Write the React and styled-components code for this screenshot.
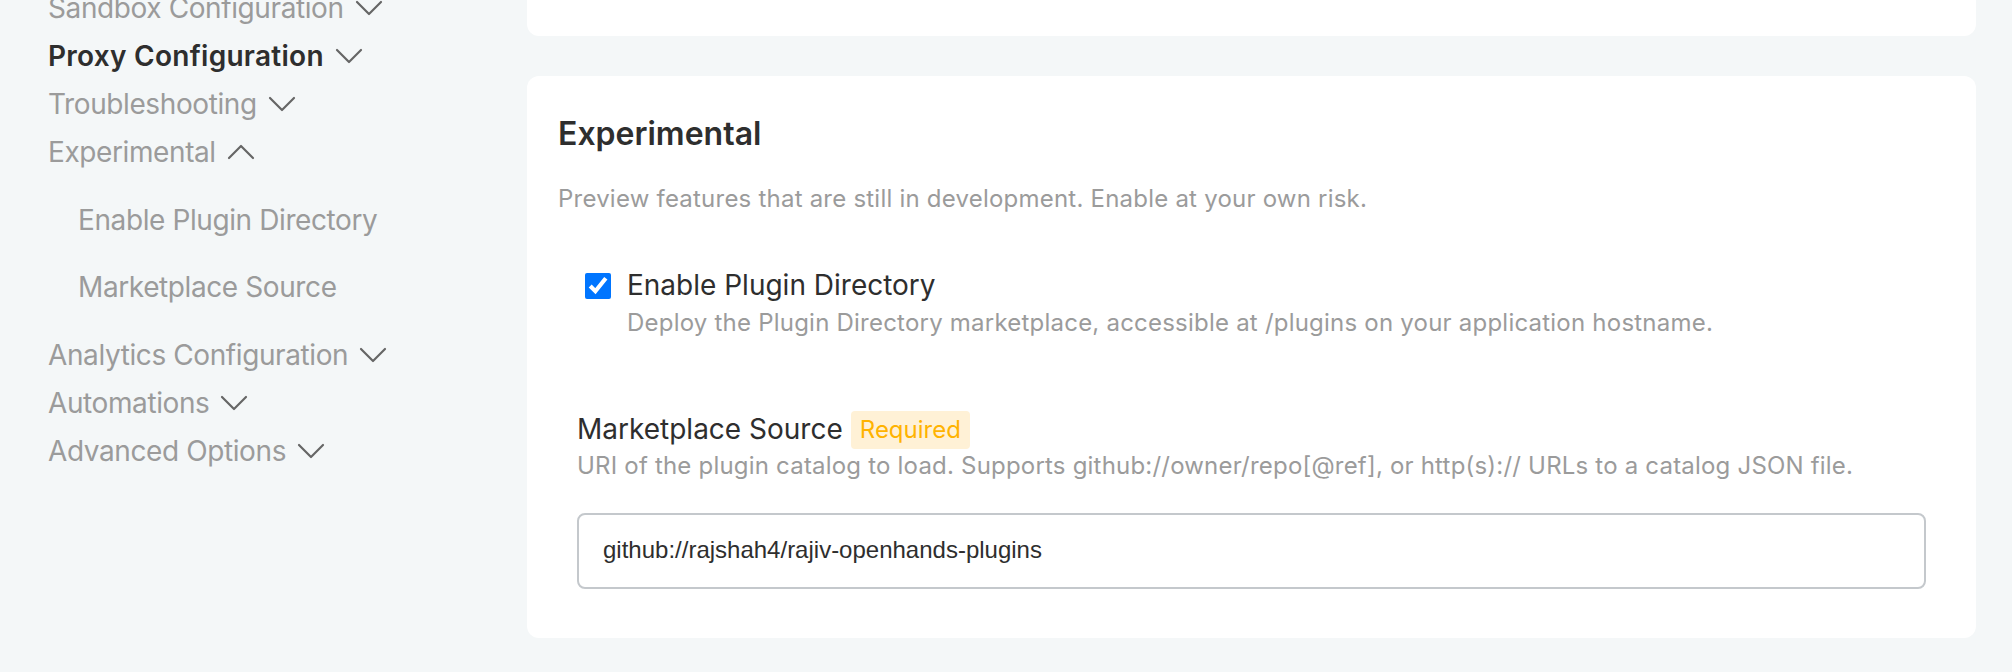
import React from "react";
import styled, { createGlobalStyle } from "styled-components";
import { ChevronDown, ChevronUp } from "lucide-react";

const GlobalStyle = createGlobalStyle`
  html, body {
    margin: 0;
    padding: 0;
    height: 100%;
    background: #f4f7f8;
    overflow: hidden;
  }
  * {
    box-sizing: border-box;
  }
`;

const navItems = [
  { label: "Sandbox Configuration" },
  { label: "Proxy Configuration", active: true },
  { label: "Troubleshooting" },
  {
    label: "Experimental",
    open: true,
    children: ["Enable Plugin Directory", "Marketplace Source"],
  },
  { label: "Analytics Configuration" },
  { label: "Automations" },
  { label: "Advanced Options" },
];

const App = () => {
  return (
    <React.Fragment>
      <GlobalStyle />
      <Page>
        <Sidebar>
          {navItems.map((item) => (
            <React.Fragment key={item.label}>
              <NavItem $active={item.active}>
                {item.label}
                {item.open ? (
                  <ChevronUp size={48} strokeWidth={1.1} color="#666666" />
                ) : (
                  <ChevronDown size={48} strokeWidth={1.1} color="#666666" />
                )}
              </NavItem>
              {item.children && (
                <SubList>
                  {item.children.map((child) => (
                    <SubItem key={child}>{child}</SubItem>
                  ))}
                </SubList>
              )}
            </React.Fragment>
          ))}
        </Sidebar>
        <Content>
          <TopCard />
          <Card>
            <CardTitle>Experimental</CardTitle>
            <CardText>
              Preview features that are still in development. Enable at your own
              risk.
            </CardText>
            <CheckRow>
              <CheckBox readOnly type="checkbox" checked />
              <div>
                <FieldLabel>Enable Plugin Directory</FieldLabel>
                <CheckHelp>
                  Deploy the Plugin Directory marketplace, accessible at
                  /plugins on your application hostname.
                </CheckHelp>
              </div>
            </CheckRow>
            <Field>
              <LabelRow>
                <FieldLabel>Marketplace Source</FieldLabel>
                <Badge>Required</Badge>
              </LabelRow>
              <FieldHelp>
                URI of the plugin catalog to load. Supports
                github://owner/repo[@ref], or http(s):// URLs to a catalog JSON
                file.
              </FieldHelp>
              <TextInput
                readOnly
                value="github://rajshah4/rajiv-openhands-plugins"
              />
            </Field>
          </Card>
        </Content>
      </Page>
    </React.Fragment>
  );
};

export default App;

const Page = styled.div`
  display: flex;
  width: 2012px;
  height: 672px;
  overflow: hidden;
  font-family: Inter, "Liberation Sans", sans-serif;
`;

const Sidebar = styled.nav`
  width: 527px;
  flex-shrink: 0;
  margin-top: -16px;
  padding-left: 48px;
`;

const NavItem = styled.div`
  display: flex;
  align-items: center;
  gap: 1px;
  height: 48px;
  font-size: 28px;
  letter-spacing: ${(props) => (props.$active ? "0.27px" : "-0.4px")};
  font-weight: ${(props) => (props.$active ? 600 : 400)};
  color: ${(props) => (props.$active ? "#2e2e2e" : "#9b9b9b")};
`;

const SubList = styled.div`
  display: flex;
  flex-direction: column;
  gap: 19px;
  padding: 20px 0 20px 30px;
`;

const SubItem = styled.div`
  display: flex;
  align-items: center;
  height: 48px;
  font-size: 28px;
  letter-spacing: -0.4px;
  color: #9b9b9b;
`;

const Content = styled.main`
  flex: 1;
  display: flex;
  flex-direction: column;
  gap: 40px;
  padding-right: 36px;
`;

const TopCard = styled.div`
  height: 36px;
  background: #ffffff;
  border-radius: 0 0 12px 12px;
`;

const Card = styled.section`
  height: 562px;
  padding: 38px 50px 0 31px;
  background: #ffffff;
  border-radius: 12px;
`;

const CardTitle = styled.h2`
  margin: 0;
  font-size: 32px;
  line-height: 40px;
  font-weight: 600;
  color: #2e2e2e;
`;

const CardText = styled.p`
  margin: 29px 0 0;
  font-size: 24px;
  line-height: 32px;
  letter-spacing: 0.22px;
  color: #9b9b9b;
`;

const CheckRow = styled.div`
  display: flex;
  align-items: flex-start;
  gap: 16px;
  margin-top: 50px;
  padding-left: 27px;
`;

const CheckBox = styled.input`
  width: 26px;
  height: 26px;
  margin: 8px 0 0;
  accent-color: #0075ff;
`;

const FieldLabel = styled.div`
  font-size: 28px;
  line-height: 40px;
  color: #2e2e2e;
`;

const CheckHelp = styled.div`
  margin-top: 2px;
  font-size: 24px;
  line-height: 32px;
  letter-spacing: 0.22px;
  color: #9b9b9b;
`;

const Field = styled.div`
  margin-top: 70px;
  padding-left: 19px;
`;

const LabelRow = styled.div`
  display: flex;
  align-items: flex-end;
  gap: 8px;
`;

const Badge = styled.span`
  padding: 0 9px;
  font-size: 24px;
  line-height: 38px;
  color: #ffb300;
  background: #fff1d6;
  border-radius: 4px;
`;

const FieldHelp = styled.div`
  margin-top: 1px;
  font-size: 24px;
  line-height: 32px;
  letter-spacing: 0.2px;
  color: #9b9b9b;
`;

const TextInput = styled.input`
  display: block;
  width: 100%;
  height: 76px;
  margin-top: 31px;
  padding: 0 24px 2px;
  font-family: "Liberation Sans", Arial, sans-serif;
  font-size: 24px;
  color: #2e2e2e;
  background: #ffffff;
  border: 2px solid #c4c8cc;
  border-radius: 8px;
  outline: none;
`;
